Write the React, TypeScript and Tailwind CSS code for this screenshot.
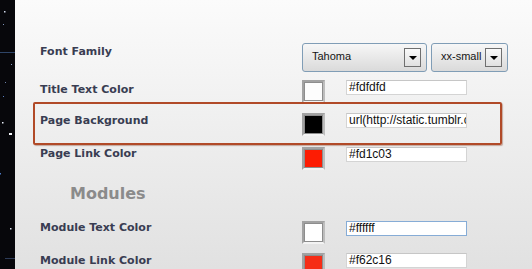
import React from 'react';

const labelCls =
  "w-[262px] shrink-0 font-['DejaVu_Sans',sans-serif] font-bold text-[11px] leading-[13px] text-[#393d52]";

function Stars() {
  return (
    <svg width="15" height="269" viewBox="0 0 15 269" className="block">
      <rect width="15" height="269" fill="#07070b" />
      <rect x="4" y="11" width="1.5" height="1.5" fill="#cfd8ea" />
      <rect x="3" y="24" width="1" height="1" fill="#7f93b8" />
      <rect x="0" y="52" width="15" height="1" fill="#3f5e8e" opacity="0.7" />
      <rect x="11" y="64" width="1" height="1" fill="#8aa0c8" />
      <rect x="5" y="82" width="1" height="1" fill="#6d82aa" />
      <rect x="3" y="96" width="1" height="1" fill="#5a7fc0" />
      <rect x="2" y="122" width="1.5" height="1.5" fill="#e6ecf6" />
      <rect x="9" y="133" width="3" height="2" fill="#f2f4f8" />
      <rect x="0" y="173" width="1" height="1.5" fill="#4d7ac4" />
      <rect x="10" y="228" width="1.5" height="1.5" fill="#dde4f0" />
      <rect x="5" y="258" width="10" height="1" fill="#2d3b57" />
    </svg>
  );
}

function Select({ value, width }: { value: string; width: string }) {
  return (
    <div
      className={`${width} h-[29px] flex items-start justify-between rounded-[3px] border border-[#809db6] bg-gradient-to-b from-[#f7f7f7] to-[#dadada] pl-[9px] pr-[5px]`}
    >
      <span className="mt-[5px] font-['Liberation_Sans',sans-serif] text-[11px] leading-[15px] text-[#151515]">
        {value}
      </span>
      <div className="mt-[4px] w-[17px] h-[19px] flex items-center justify-center border border-[#6f6f6f] bg-gradient-to-b from-[#fafafa] to-[#e0e0e0]">
        <div className="w-0 h-0 border-l-[4px] border-r-[4px] border-t-[4px] border-l-transparent border-r-transparent border-t-black mt-[1px]" />
      </div>
    </div>
  );
}

function Swatch({ color }: { color: string }) {
  return (
    <div className="w-[23px] h-[23px] shrink-0 border-2 border-t-[#a2a2a2] border-l-[#a2a2a2] border-r-[#bdbdbd] border-b-[#f3f3f3]">
      <div className="w-full h-full border border-[#8d8d8d]" style={{ backgroundColor: color }} />
    </div>
  );
}

function Field({ value, focused }: { value: string; focused?: boolean }) {
  return (
    <div
      className={`ml-[21px] w-[121px] h-[15px] overflow-hidden whitespace-nowrap bg-white border pl-[2px] font-['Liberation_Sans',sans-serif] text-[12px] leading-[13px] text-[#111] ${
        focused ? 'border-[#86acd6]' : 'border-[#d4d4d4] border-t-[#c6c6c6]'
      }`}
    >
      {value}
    </div>
  );
}

function ColorRow({
  label,
  color,
  value,
  focused,
  className,
  labelTop,
}: {
  label: string;
  color: string;
  value: string;
  focused?: boolean;
  className: string;
  labelTop: string;
}) {
  return (
    <div className={`flex items-start h-[23px] ${className}`}>
      <div className={`${labelCls} ${labelTop}`}>{label}</div>
      <Swatch color={color} />
      <Field value={value} focused={focused} />
    </div>
  );
}

export default function App() {
  return (
    <div className="w-[532px] h-[269px] flex overflow-hidden">
      <div className="w-[15px] shrink-0">
        <Stars />
      </div>

      <div className="relative flex-1 flex flex-col bg-gradient-to-b from-[#fbfbfb] to-[#e1e1e1] pt-[43px]">
        {/* highlight around the edited setting */}
        <div className="absolute left-[18px] top-[102px] w-[469px] h-[43px] border-2 border-[#b14a28] rounded-[2px] shadow-[1px_1px_1px_rgba(120,40,10,0.35)]" />

        {/* Font Family */}
        <div className="flex items-start h-[29px] pl-[25px]">
          <div className={`${labelCls} mt-[2px]`}>Font Family</div>
          <div className="flex gap-[4px]">
            <Select value="Tahoma" width="w-[125px]" />
            <Select value="xx-small" width="w-[77px]" />
          </div>
        </div>

        <div className="pl-[25px]">
          <ColorRow label="Title Text Color" color="#fdfdfd" value="#fdfdfd" className="mt-[8px]" labelTop="mt-[3px]" />
          <ColorRow
            label="Page Background"
            color="#000000"
            value="url(http://static.tumblr.com/"
            className="mt-[10px]"
            labelTop="mt-[1px]"
          />
          <ColorRow label="Page Link Color" color="#fd1c03" value="#fd1c03" className="mt-[11px]" labelTop="mt-[0px]" />
        </div>

        {/* section divider */}
        <div className="mt-[7px] ml-[55px] h-px bg-gradient-to-r from-transparent via-[#b3b3b3] via-40% to-[#b3b3b3]" />

        <div className="mt-[7px] pl-[55px] font-['DejaVu_Sans',sans-serif] font-bold text-[16px] leading-[19px] text-[#8b8b8b]">
          Modules
        </div>

        <div className="pl-[25px]">
          <ColorRow
            label="Module Text Color"
            color="#ffffff"
            value="#ffffff"
            focused
            className="mt-[18px]"
            labelTop="mt-[0px]"
          />
          <ColorRow label="Module Link Color" color="#f62c16" value="#f62c16" className="mt-[9px]" labelTop="mt-[1px]" />
        </div>
      </div>
    </div>
  );
}
